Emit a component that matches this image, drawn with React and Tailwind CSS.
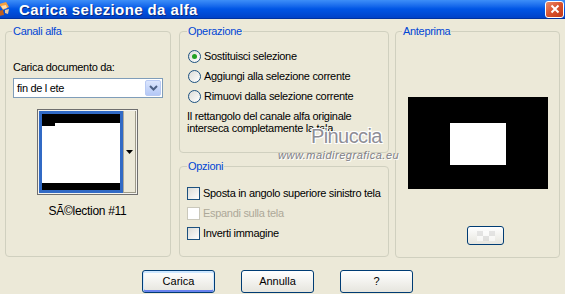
import React from 'react';

function Radio({ checked, label }) {
  return (
    <div className="flex items-center h-[20px] ml-[1px]">
      <span className="w-[13px] h-[13px] rounded-full border border-[#1C5180] bg-linear-to-br from-[#DCDCD7] to-white flex items-center justify-center">
        {checked && <span className="w-[5px] h-[5px] rounded-full bg-[#21A121]" />}
      </span>
      <span className="ml-[3px] whitespace-nowrap">{label}</span>
    </div>
  );
}

function Check({ label, disabled }) {
  return (
    <div className="flex items-center h-[20px]">
      <span
        className={
          disabled
            ? 'w-[13px] h-[13px] shrink-0 border border-[#CAC8BB] bg-white'
            : 'w-[13px] h-[13px] shrink-0 border border-[#1C5180] bg-linear-to-br from-[#DCDCD7] to-white'
        }
      />
      <span className={disabled ? 'ml-[3px] whitespace-nowrap text-[#ACA899]' : 'ml-[3px] whitespace-nowrap'}>
        {label}
      </span>
    </div>
  );
}

function Button({ children, primary }) {
  return (
    <button
      className={
        primary
          ? 'w-[73px] h-[23px] rounded-[3px] border border-[#003C74] bg-linear-to-b from-white to-[#E6E5DE] shadow-[inset_0_1px_0_1px_#CEE7FF,inset_0_-1px_0_1px_#6982EE] text-[11px]'
          : 'w-[73px] h-[23px] rounded-[3px] border border-[#003C74] bg-linear-to-b from-white to-[#E6E5DE] text-[11px]'
      }
    >
      {children}
    </button>
  );
}

export default function App() {
  return (
    <div className="relative w-[565px] h-[294px] overflow-hidden bg-[#ECE9D8] text-[11px] leading-[13px] text-black font-['Liberation_Sans',Arial,sans-serif]">
      {/* title bar */}
      <div className="h-[19px] flex items-center bg-linear-to-b from-[#3D8EF8] via-[#0055E5] to-[#0042C8] border-b border-[#0032A0]">
        <svg width="16" height="16" viewBox="0 0 16 16" className="-ml-[3px]">
          <path d="M2 3 L9 1 L12 6 L6 9 Z" fill="#F5A040" />
          <path d="M4 5 L9 4 L10 7 L6 8 Z" fill="#FFE0B0" />
          <path d="M1 10 L6 9 L7 14 L2 15 Z" fill="#C06020" />
          <path d="M8 9 L12 8 L11 13 L8 12 Z" fill="#E8C8A0" />
        </svg>
        <span className="ml-[6px] text-white font-bold text-[15px] tracking-[0.4px] [text-shadow:1px_1px_0_#0A2A80]">
          Carica selezione da alfa
        </span>
        <div className="ml-auto mr-[1px] w-[19px] h-[17px] rounded-[3px] border border-white bg-linear-to-br from-[#E98A6A] via-[#D9512C] to-[#C0391A] flex items-center justify-center">
          <svg width="10" height="10" viewBox="0 0 10 10">
            <path d="M1.5 1.5 L8.5 8.5 M8.5 1.5 L1.5 8.5" stroke="white" strokeWidth="2" />
          </svg>
        </div>
      </div>

      {/* body */}
      <div className="pt-[6px] pl-[5px] tracking-[-0.3px]">
        <div className="grid grid-cols-[166px_210px_163px] gap-x-[8px]">
          {/* Canali alfa */}
          <fieldset className="h-[232px] border border-[#D0D0BF] rounded-[4px] pl-[6px] pr-[7px]">
            <legend className="px-[1px] text-[#0046D5]">Canali alfa</legend>
            <div className="mt-[23px] ml-[1px]">Carica documento da:</div>
            <div className="mt-[4px] ml-[1px] h-[20px] border border-[#7F9DB9] bg-white flex items-center">
              <span className="ml-[3px]">fin de l ete</span>
              <span className="ml-auto mr-[1px] w-[16px] h-[16px] rounded-[2px] border border-[#B9CAF3] bg-linear-to-b from-[#DCE6FD] to-[#B4C8F6] flex items-center justify-center">
                <svg width="9" height="6" viewBox="0 0 9 6">
                  <path d="M1 1 L4.5 4.5 L8 1" stroke="#4D6185" strokeWidth="2" fill="none" />
                </svg>
              </span>
            </div>
            <div className="mt-[11px] mx-auto w-[101px] h-[86px] border border-[#6F6F6F] bg-[#F4F3EE] flex p-[1px]">
              <div className="w-[84px] h-full border-[3px] border-[#316AC5] bg-white flex flex-col">
                <div className="h-[9px] bg-black" />
                <div className="w-[13px] h-[3px] bg-black" />
                <div className="flex-1" />
                <div className="h-[7px] bg-black" />
              </div>
              <div className="flex-1 border-l border-[#ACA899] border-r border-b border-r-[#9D9A8A] border-b-[#9D9A8A] bg-[#ECE9D8] flex items-center justify-center">
                <svg width="7" height="4" viewBox="0 0 7 4">
                  <path d="M0 0 L7 0 L3.5 4 Z" fill="black" />
                </svg>
              </div>
            </div>
            <div className="mt-[10px] text-center text-[12px]">SÃ©lection #11</div>
          </fieldset>

          {/* Operazione / Opzioni */}
          <div className="flex flex-col gap-[7px]">
            <fieldset className="h-[128px] border border-[#D0D0BF] rounded-[4px] pl-[7px]">
              <legend className="px-[1px] text-[#0046D5]">Operazione</legend>
              <div className="mt-[8px]">
                <Radio checked label="Sostituisci selezione" />
                <Radio label="Aggiungi alla selezione corrente" />
                <Radio label="Rimuovi dalla selezione corrente" />
              </div>
              <p className="mt-[4px] leading-[12px]">
                Il rettangolo del canale alfa originale
                <br />
                interseca completamente la tela.
              </p>
            </fieldset>
            <fieldset className="h-[97px] border border-[#D0D0BF] rounded-[4px] pl-[7px]">
              <legend className="px-[1px] text-[#0046D5]">Opzioni</legend>
              <div className="mt-[10px]">
                <Check label="Sposta in angolo superiore sinistro tela" />
                <Check disabled label="Espandi sulla tela" />
                <Check label="Inverti immagine" />
              </div>
            </fieldset>
          </div>

          {/* Anteprima */}
          <fieldset className="h-[233px] -ml-[2px] border border-[#D0D0BF] rounded-[4px] pl-[6px]">
            <legend className="px-[1px] text-[#0046D5]">Anteprima</legend>
            <div className="mt-[59px] ml-[6px] w-[140px] h-[92px] bg-black pt-[26px] pl-[42px]">
              <div className="w-[56px] h-[42px] bg-white" />
            </div>
            <div className="mt-[37px] ml-[65px] w-[37px] h-[19px] rounded-[3px] border border-[#003C74] bg-linear-to-b from-white to-[#E6E5DE] flex items-center justify-center">
              <div className="grid grid-cols-3 w-[18px] h-[10px] opacity-60">
                <span className="bg-[#D8D8D8]" />
                <span className="bg-white" />
                <span className="bg-[#D8D8D8]" />
                <span className="bg-white" />
                <span className="bg-[#D8D8D8]" />
                <span className="bg-white" />
              </div>
            </div>
          </fieldset>
        </div>

        {/* buttons */}
        <div className="mt-[12px] pl-[137px] flex gap-[26px] tracking-normal">
          <Button primary>Carica</Button>
          <Button>Annulla</Button>
          <Button>?</Button>
        </div>
      </div>

      {/* watermark */}
      <div className="absolute left-[311px] top-[125px] text-[20px] leading-[22px] tracking-[-0.6px] text-[#8E8E96] [text-shadow:1px_1px_0_white,-1px_-1px_0_white,1px_-1px_0_white,-1px_1px_0_white]">
        Pinuccia
      </div>
      <div className="absolute left-[278px] top-[149px] text-[11px] italic tracking-[0.5px] text-[#7E7E88] [text-shadow:1px_1px_0_white]">
        www.maidiregrafica.eu
      </div>
    </div>
  );
}
